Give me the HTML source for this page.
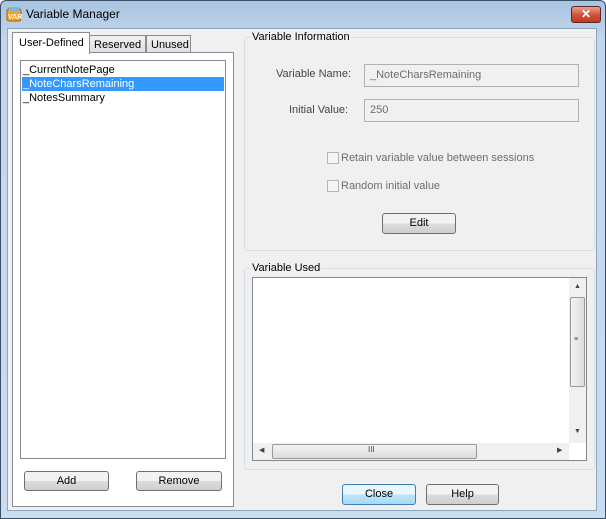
<!DOCTYPE html><html><head><style>
*{box-sizing:border-box;margin:0;padding:0}
body{width:606px;height:519px;overflow:hidden;font-family:"Liberation Sans",sans-serif;font-size:11px;color:#000;background:#fff}
.win{position:absolute;left:0;top:0;width:606px;height:519px;background:linear-gradient(#a9c4e0,#c3d7ec 40px,#c9dcf0);border:1px solid #3b4f68;border-radius:6px 6px 0 0}
.client{position:absolute;left:7px;top:28px;width:590px;height:483px;background:#f0f0f0;border:1px solid #8ea4bd}
.a{position:absolute}
.btn{position:absolute;border:1px solid #707070;border-radius:3px;background:linear-gradient(#f2f2f2 50%,#dddddd 50%,#cfcfcf);text-align:center;font-size:11px}
.grp{position:absolute;border:1px solid #d5dfe5;border-radius:3px}
.gl{position:absolute;background:#f0f0f0;padding:0 1px;top:-7px;left:6px;color:#000}
.tb{position:absolute;border:1px solid #adb2b5;background:#f0f0f0;color:#6d6d6d;padding:4px 0 0 5px}
.cb{position:absolute;width:12px;height:12px;border:1px solid #b4b4b4;background:#f4f4f4}
</style></head><body>
<div class="win">
<svg class="a" style="left:5px;top:5px" width="16" height="16"><rect x="1" y="3" width="14" height="12" rx="2" fill="#f6a21e" stroke="#b35a00"/><rect x="3" y="1" width="10" height="4" fill="#7fb2e5"/><text x="2" y="13" font-size="7" font-weight="bold" fill="#fff" font-family="Liberation Sans">VAR</text></svg>
<div class="a" style="left:25px;top:6px;font-size:12px">Variable Manager</div>
<div class="a" style="left:570px;top:5px;width:30px;height:17px;border:1px solid #5a2a22;border-radius:3px;background:linear-gradient(#e8a393,#d0563d 50%,#c0391f);color:#fff;text-align:center;font-weight:bold;font-size:12px;line-height:15px">✕</div>
</div>
<div class="client"></div>
<!-- tabs -->
<div class="a" style="left:12px;top:52px;width:222px;height:455px;background:#fff;border:1px solid #898c95"></div>
<div class="a" style="left:89px;top:35px;width:57px;height:18px;border:1px solid #898c95;background:linear-gradient(#f2f2f2,#e0e0e0);padding:3px 0 0 4px">Reserved</div>
<div class="a" style="left:146px;top:35px;width:45px;height:18px;border:1px solid #898c95;background:linear-gradient(#f2f2f2,#e0e0e0);padding:3px 0 0 4px">Unused</div>
<div class="a" style="left:12px;top:32px;width:78px;height:22px;border:1px solid #898c95;border-bottom:none;background:#fff;padding:4px 0 0 6px">User-Defined</div>
<div class="a" style="left:20px;top:60px;width:206px;height:399px;border:1px solid #828790;background:#fff"></div>
<div class="a" style="left:23px;top:64px">_CurrentNotePage</div>
<div class="a" style="left:22px;top:77px;width:202px;height:14px;background:#3399ff"></div>
<div class="a" style="left:23px;top:78px;color:#fff">_NoteCharsRemaining</div>
<div class="a" style="left:23px;top:92px">_NotesSummary</div>
<div class="btn" style="left:24px;top:471px;width:85px;height:20px;line-height:18px">Add</div>
<div class="btn" style="left:136px;top:471px;width:86px;height:20px;line-height:18px">Remove</div>
<!-- info group -->
<div class="grp" style="left:244px;top:37px;width:351px;height:214px"><div class="gl">Variable Information</div></div>
<div class="a" style="left:276px;top:68px;color:#444">Variable Name:</div>
<div class="tb" style="left:364px;top:64px;width:215px;height:23px">_NoteCharsRemaining</div>
<div class="a" style="left:289px;top:104px;color:#444">Initial Value:</div>
<div class="tb" style="left:364px;top:99px;width:215px;height:23px">250</div>
<div class="cb" style="left:327px;top:152px"></div><div class="a" style="left:341px;top:152px;color:#6d6d6d">Retain variable value between sessions</div>
<div class="cb" style="left:327px;top:180px"></div><div class="a" style="left:341px;top:180px;color:#6d6d6d">Random initial value</div>
<div class="btn" style="left:382px;top:213px;width:74px;height:21px;line-height:19px">Edit</div>
<!-- used group -->
<div class="grp" style="left:244px;top:268px;width:351px;height:202px"><div class="gl">Variable Used</div></div>
<div class="a" style="left:252px;top:277px;width:335px;height:184px;border:1px solid #828790;background:#fff"></div>
<div class="a" style="left:569px;top:278px;width:17px;height:165px;background:#f0f0f0"></div>
<div class="a" style="left:570px;top:297px;width:15px;height:90px;border:1px solid #999;border-radius:2px;background:linear-gradient(90deg,#f3f3f3,#dcdcdc)"></div>
<div class="a" style="left:574px;top:283px;font-size:7px;color:#444">▲</div>
<div class="a" style="left:574px;top:428px;font-size:7px;color:#444">▼</div>
<div class="a" style="left:574px;top:336px;font-size:7px;color:#444">≡</div>
<div class="a" style="left:253px;top:443px;width:316px;height:17px;background:#f0f0f0"></div>
<div class="a" style="left:272px;top:444px;width:205px;height:15px;border:1px solid #999;border-radius:2px;background:linear-gradient(#f3f3f3,#dcdcdc)"></div>
<div class="a" style="left:259px;top:446px;font-size:7px;color:#444">◀</div>
<div class="a" style="left:557px;top:446px;font-size:7px;color:#444">▶</div>
<div class="a" style="left:368px;top:445px;font-size:8px;color:#444">III</div>
<div class="btn" style="left:342px;top:484px;width:74px;height:21px;line-height:19px;border-color:#3c7fb1;background:linear-gradient(#eaf6fd 50%,#bee6fd 50%,#a7d9f5)">Close</div>
<div class="btn" style="left:426px;top:484px;width:73px;height:21px;line-height:19px">Help</div>
</body></html>
